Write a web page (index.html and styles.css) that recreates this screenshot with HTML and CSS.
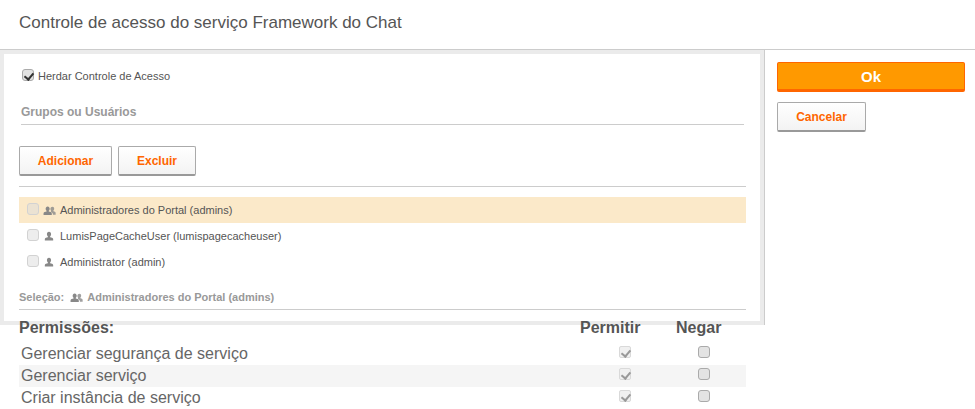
FILE: index.html
```html
<!DOCTYPE html>
<html lang="pt-BR">
<head>
<meta charset="utf-8">
<title>Controle de acesso</title>
<link rel="stylesheet" href="styles.css">
</head>
<body>
<svg class="defs" width="0" height="0" aria-hidden="true">
  <symbol id="user" viewBox="0 0 12 12"><path d="M6 1c1.700 0 2.500 1.200 2.500 2.800 0 1.100-.4 2-1.100 2.600v1c1.300.4 3.600.8 3.600 2.100V11.500H1V9.500c0-1.300 2.300-1.700 3.600-2.100v-1C3.900 5.800 3.500 4.900 3.500 3.800 3.500 2.200 4.300 1 6 1z"/></symbol>
  <symbol id="group" viewBox="0 0 14 12"><path d="M5 1.500c1.400 0 2.200 1.100 2.200 2.500 0 1-.3 1.800-1 2.300v.9c1.200.3 3.300.8 3.300 2V11H.5V9.200c0-1.200 2.100-1.700 3.300-2v-.9c-.7-.5-1-1.300-1-2.300C2.800 2.600 3.600 1.500 5 1.500z"/><path d="M10.300 2c1.200 0 1.800.9 1.800 2.100 0 .8-.3 1.500-.8 1.900v.8c1 .3 2.400.7 2.400 1.600V10.500h-2.900c0-1.700-.9-2.500-2.200-3V6c-.4-.4-.6-1.100-.6-1.900C8 2.900 9.100 2 10.300 2z" opacity=".8"/></symbol>
</svg>
<header class="top"><h1>Controle de acesso do serviço Framework do Chat</h1></header>
<div class="layout">
  <main class="left">
    <section class="panel">
      <label class="inherit"><input type="checkbox" class="cb cb-on" checked><span>Herdar Controle de Acesso</span></label>
      <h2 class="group-title">Grupos ou Usuários</h2>
      <div class="actions">
        <button class="btn btn-add">Adicionar</button>
        <button class="btn btn-del">Excluir</button>
      </div>
      <ul class="list">
        <li class="item selected"><input type="checkbox" class="cb cb-off"><svg class="ico-g"><use href="#group"/></svg><span>Administradores do Portal (admins)</span></li>
        <li class="item"><input type="checkbox" class="cb cb-off"><svg class="ico-u"><use href="#user"/></svg><span>LumisPageCacheUser (lumispagecacheuser)</span></li>
        <li class="item"><input type="checkbox" class="cb cb-off"><svg class="ico-u"><use href="#user"/></svg><span>Administrator (admin)</span></li>
      </ul>
      <div class="selection"><span>Seleção:</span><svg class="ico-g"><use href="#group"/></svg><span>Administradores do Portal (admins)</span></div>
    </section>
    <section class="perms">
      <div class="perm-head"><span class="perm-name">Permissões:</span><span class="head-a">Permitir</span><span class="head-b">Negar</span></div>
      <div class="perm-row"><span class="perm-name">Gerenciar segurança de serviço</span><span class="col-a"><input type="checkbox" class="cb cb-dis" checked disabled></span><span class="col-b"><input type="checkbox" class="cb cb-neg"></span></div>
      <div class="perm-row alt"><span class="perm-name">Gerenciar serviço</span><span class="col-a"><input type="checkbox" class="cb cb-dis" checked disabled></span><span class="col-b"><input type="checkbox" class="cb cb-neg"></span></div>
      <div class="perm-row"><span class="perm-name">Criar instância de serviço</span><span class="col-a"><input type="checkbox" class="cb cb-dis" checked disabled></span><span class="col-b"><input type="checkbox" class="cb cb-neg"></span></div>
    </section>
  </main>
  <aside class="side">
    <button class="btn-ok">Ok</button>
    <button class="btn btn-cancel">Cancelar</button>
  </aside>
</div>
</body>
</html>
```

FILE: styles.css
```css
* { box-sizing: border-box; }
html, body { margin: 0; padding: 0; height: 100%; overflow: hidden; background: #fff; }
body { font-family: "Liberation Sans", Arial, sans-serif; color: #555; }
.defs { position: absolute; }
.top { height: 50px; border-bottom: 1px solid #ccc; padding: 13px 19px 0; }
.top h1 { margin: 0; font-size: 17px; line-height: 20px; font-weight: 400; color: #555; }
.layout { display: flex; align-items: flex-start; }
.left { width: 764px; flex: none; }
.panel { height: 275px; border: 4px solid #ebebeb; padding: 0 0 0 15px; background: #fff; }
.inherit { display: flex; align-items: center; height: 14px; margin: 15px 0 0 3px; font-size: 11px; color: #555; }
.inherit span { margin-left: 4px; }
.cb { appearance: none; -webkit-appearance: none; margin: 0; flex: none; width: 12px; height: 12px; border-radius: 3px; display: block; position: relative; }
.cb-on { background: #e2e2e2; border: 1px solid #aaa; margin-top: -2px; }
.cb-on::after { content: ""; position: absolute; left: 3px; top: .5px; width: 4px; height: 7px; border: solid #333; border-width: 0 2px 2px 0; transform: rotate(40deg); }
.cb-off { background: rgba(220, 220, 220, .5); border: 1px solid #d2d2d2; }
.cb-dis { background: #f0f0f0; border: 1px solid #d9d9d9; border-radius: 2px; margin-top: -4px; }
.cb-dis::after { content: ""; position: absolute; left: 3px; top: .5px; width: 4px; height: 7px; border: solid #999; border-width: 0 2px 2px 0; transform: rotate(40deg); }
.cb-neg { background: #e3e3e3; border: 1px solid #aaa; margin-top: -4px; }
.group-title { margin: 22px 0 0 2px; width: 723px; height: 20px; border-bottom: 1px solid #ccc; font-size: 12px; line-height: 14px; font-weight: 700; color: #999; }
.actions { display: flex; gap: 6px; margin-top: 21px; height: 41px; border-bottom: 1px solid #ccc; width: 727px; }
.btn { height: 30px; padding: 0; border: 1px solid #aaa; border-bottom: 2px solid #999; border-radius: 2px; background: linear-gradient(#fff, #f3f3f3); color: #f60; font: 700 12px "Liberation Sans", Arial, sans-serif; }
.btn-add { width: 93px; }
.btn-del { width: 78px; }
.list { list-style: none; margin: 10px 0 0; padding: 0; width: 727px; }
.item { height: 26px; display: flex; align-items: center; padding-left: 8px; font-size: 11px; color: #555; }
.item .cb { margin-top: -3px; }
.item.selected { background: #fbe9c9; }
.ico-g { width: 13px; height: 11px; fill: #888; margin-left: 4px; flex: none; }
.ico-u { width: 10px; height: 10px; fill: #888; margin-left: 5px; flex: none; }
.item span { margin-left: 4px; }
.item .ico-u + span { margin-left: 6px; }
.selection { display: flex; align-items: center; width: 727px; height: 23px; margin-top: 12px; border-bottom: 1px solid #ccc; font-size: 11px; font-weight: 700; color: #999; padding-bottom: 2px; }
.selection .ico-g { margin-left: 6px; }
.selection span:last-child { margin-left: 4px; }
.perms { position: relative; margin: -8px 0 0 19px; width: 727px; }
.perm-head { display: flex; height: 26px; font-size: 16px; line-height: 22px; font-weight: 700; color: #555; }
.head-a { width: 60px; }
.head-b { width: 45px; margin: 0 25px 0 36px; }
.perm-row { display: flex; align-items: center; height: 22px; font-size: 16px; color: #666; }
.perm-row .perm-name { padding-left: 2px; }
.perm-row.alt { background: #f5f5f5; }
.perm-name { flex: 1; }
.col-a { width: 74px; display: flex; justify-content: center; }
.col-b { width: 84px; display: flex; justify-content: center; }
.side { flex: 1; height: 275px; border-left: 1px solid #ccc; padding: 12px 10px 0 12px; display: flex; flex-direction: column; align-items: flex-start; gap: 10px; }
.btn-ok { width: 100%; height: 30px; border: 1px solid #f60; border-bottom-width: 3px; border-radius: 2px; background: #f90; color: #fff; font: 700 15px "Liberation Sans", Arial, sans-serif; padding: 0; }
.btn-cancel { width: 89px; }
```
